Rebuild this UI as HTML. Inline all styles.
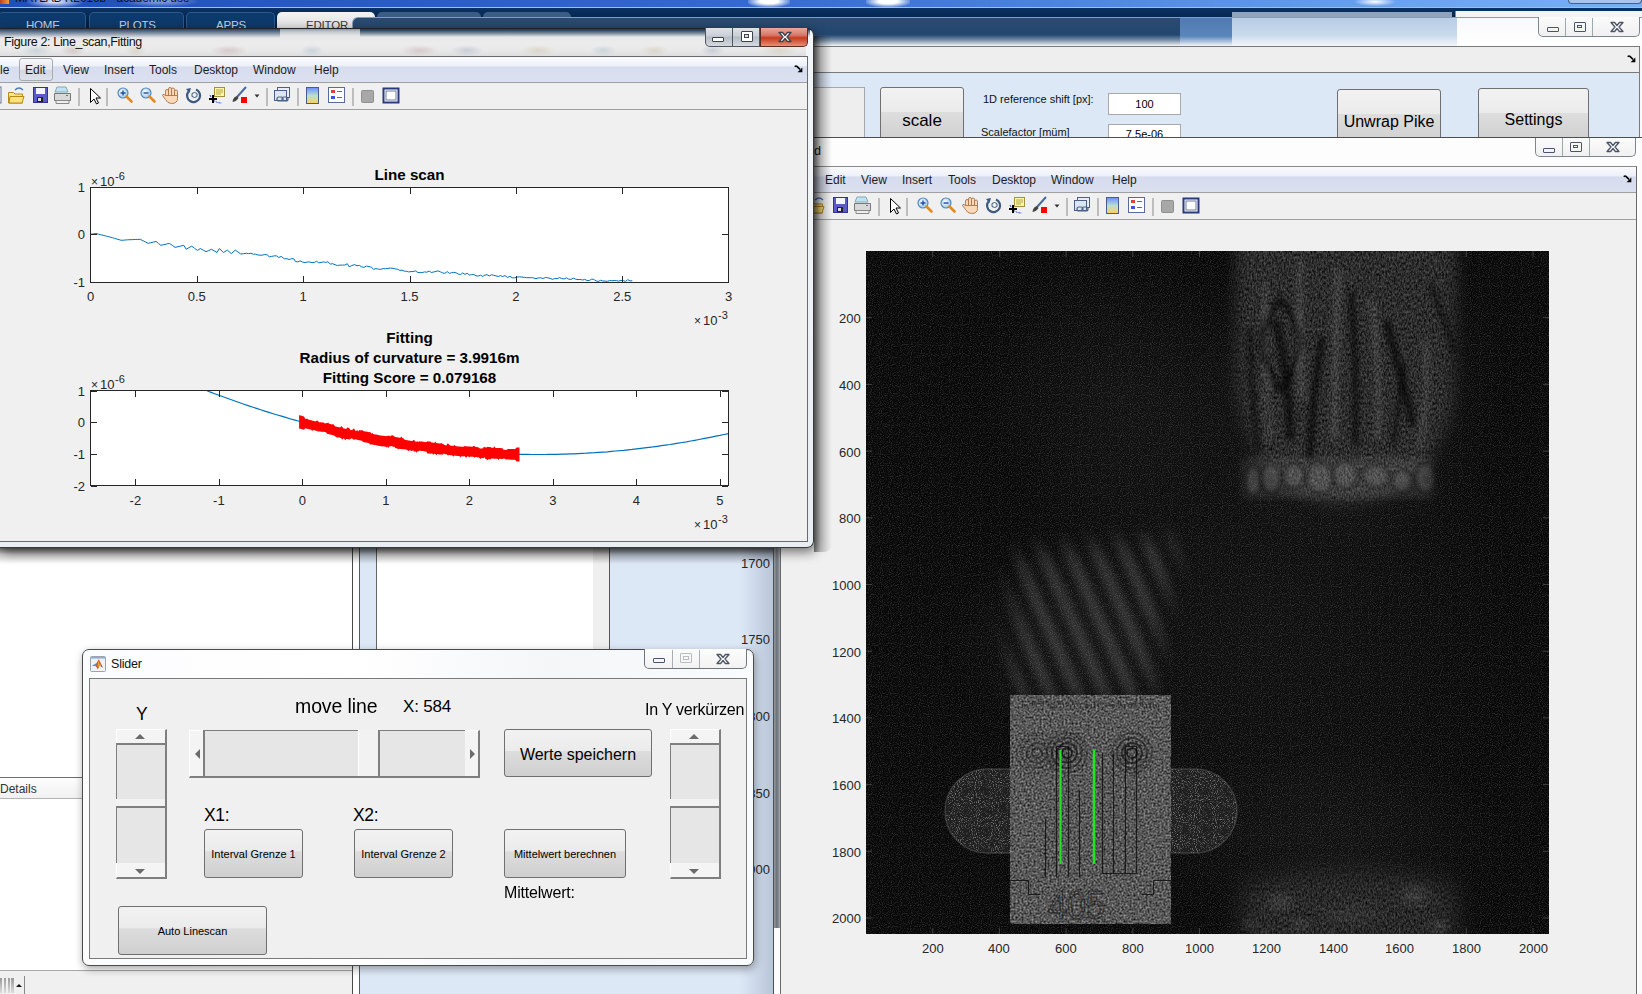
<!DOCTYPE html>
<html><head><meta charset="utf-8"><style>
*{margin:0;padding:0;box-sizing:border-box}
html,body{width:1642px;height:994px;overflow:hidden}
body{position:relative;background:#f0f0f0;font-family:"Liberation Sans",sans-serif;color:#000}
.a{position:absolute}
.t{position:absolute;white-space:nowrap;line-height:1}
.menu span{position:absolute;top:6px;font-size:12px;color:#1e1e1e}
.tick{position:absolute;font-size:13px;color:#262626;white-space:nowrap;line-height:1}
.btn{position:absolute;border:1px solid #707070;border-radius:3px;background:linear-gradient(#f2f2f2 0%,#ebebeb 45%,#dddddd 46%,#cfcfcf 100%);text-align:center;white-space:nowrap;color:#000}
.cap{position:absolute;border:1px solid #5f6b7a;border-top:none;border-radius:0 0 5px 5px;background:linear-gradient(#f4f6f9,#e6eaef 50%,#d6dce4 51%,#e8ecf1)}
</style></head><body>


<svg width="0" height="0" style="position:absolute"><defs>
<linearGradient id="gfold" x1="0" y1="0" x2="0" y2="1"><stop offset="0" stop-color="#fff2a8"/><stop offset="1" stop-color="#e8b830"/></linearGradient>
<linearGradient id="gcb" x1="0" y1="0" x2="0" y2="1"><stop offset="0" stop-color="#6a8cff"/><stop offset=".5" stop-color="#b8e0d0"/><stop offset="1" stop-color="#ffd060"/></linearGradient>
<radialGradient id="glens" cx=".4" cy=".4" r=".6"><stop offset="0" stop-color="#ffffff"/><stop offset="1" stop-color="#9cc8ee"/></radialGradient>
<symbol id="tb" overflow="visible">
 <rect x="-14" y="1" width="15" height="16" fill="#fff" stroke="#6a7090"/>
 <path d="M8.5 6.5h5l1.5 1.5h7.5v9h-14z" fill="url(#gfold)" stroke="#b58a18"/>
 <path d="M10 10.5h14l-2 6.5h-13z" fill="#ffe27a" stroke="#b58a18"/>
 <path d="M15 4 q4 -4 8 0" fill="none" stroke="#4a78b8" stroke-width="1.3"/>
 <rect x="33.5" y="1.5" width="14" height="15" fill="#5a5ac8" stroke="#33338a"/>
 <rect x="36" y="2" width="9" height="6" fill="#f4f4ff"/>
 <rect x="37" y="11" width="6" height="5" fill="#222"/><rect x="38" y="12" width="3" height="3" fill="#ddd"/>
 <path d="M57 1h9l2 5h-13z" fill="#bfe2f8" stroke="#8aa"/>
 <path d="M54.5 7.5h16v7h-16z" fill="#d8d8d8" stroke="#777"/>
 <path d="M56 14.5h13v3h-13z" fill="#eee" stroke="#888"/>
 <rect x="66" y="9" width="2" height="1" fill="#2a2"/>
 <rect x="78.5" y="2" width="1" height="18" fill="#8a8a8a"/>
 <path d="M90.5 2.5v14l3.5-3.5 2.5 5 2-1-2.5-5h4.5z" fill="#fff" stroke="#000" stroke-width="1"/>
 <rect x="106.5" y="2" width="1" height="18" fill="#8a8a8a"/>
 <circle cx="123" cy="7" r="5" fill="url(#glens)" stroke="#5a8ab8" stroke-width="1.2"/>
 <path d="M120.5 7h5M123 4.5v5" stroke="#1a50a0" stroke-width="1.4"/>
 <path d="M126.5 10.5l5 5" stroke="#e08a20" stroke-width="2.6" stroke-linecap="round"/>
 <circle cx="146" cy="7" r="5" fill="url(#glens)" stroke="#5a8ab8" stroke-width="1.2"/>
 <path d="M143.5 7h5" stroke="#1a50a0" stroke-width="1.4"/>
 <path d="M149.5 10.5l5 5" stroke="#e08a20" stroke-width="2.6" stroke-linecap="round"/>
 <g fill="#fbd9b8" stroke="#a8744a" stroke-width=".9"><rect x="165.5" y="3.5" width="3" height="9" rx="1.5"/><rect x="168.5" y="1.5" width="3" height="10" rx="1.5"/><rect x="171.5" y="2" width="3" height="10" rx="1.5"/><rect x="174.5" y="4" width="3" height="9" rx="1.5"/><path d="M165.5 9.5h12v3q0 5 -6 5q-4 0 -6 -4l-3 -4q0 -1.5 1.5 -1z"/></g>
 <path d="M196 3.5a6.5 6.5 0 1 1 -7.5 2" fill="none" stroke="#3a5a80" stroke-width="2.2"/>
 <path d="M186 3l3.5 4 1.5 -5z" fill="#3a5a80"/>
 <path d="M192 7.5l2.5 -1 2.5 1v3l-2.5 1 -2.5 -1z" fill="none" stroke="#3a5a80"/>
 <rect x="214.5" y="1.5" width="10" height="9" fill="#fff6a0" stroke="#a09040"/>
 <path d="M216 4h7M216 6h7M216 8h5" stroke="#a09040" stroke-width=".8"/>
 <path d="M210 9q3 8 12 8" fill="none" stroke="#2040c0" stroke-dasharray="2 1"/>
 <path d="M213 9v8M209 13h8" stroke="#000" stroke-width="2"/>
 <path d="M246 1l-9 10" stroke="#4a6aa0" stroke-width="2"/>
 <path d="M237 10q-4 1 -4.5 6 4 -0.5 6 -4z" fill="#444"/>
 <rect x="241" y="11" width="6" height="6" fill="#f00"/>
 <path d="M254.5 8.5h5l-2.5 3z" fill="#333"/>
 <rect x="266.5" y="2" width="1" height="18" fill="#8a8a8a"/>
 <rect x="277.5" y="1.5" width="12" height="10" fill="#e8eef8" stroke="#4a6088"/>
 <rect x="274.5" y="4.5" width="12" height="10" fill="#dbe6f4" stroke="#4a6088"/>
 <rect x="277" y="11" width="6" height="4" rx="2" fill="none" stroke="#4a6088" stroke-width="1.2"/><rect x="282" y="11" width="6" height="4" rx="2" fill="none" stroke="#4a6088" stroke-width="1.2"/>
 <rect x="297.5" y="2" width="1" height="18" fill="#8a8a8a"/>
 <rect x="306.5" y="1.5" width="12" height="16" fill="url(#gcb)" stroke="#4a5a8a"/>
 <rect x="328.5" y="1.5" width="16" height="15" fill="#fff" stroke="#5a6a9a"/>
 <rect x="331" y="4" width="4" height="3" fill="#e04040"/><rect x="331" y="10" width="4" height="3" fill="#4050e0"/>
 <path d="M337 5.5h5M337 11.5h5" stroke="#5a6a9a"/>
 <rect x="352.5" y="2" width="1" height="18" fill="#8a8a8a"/>
 <rect x="361.5" y="4.5" width="12" height="12" rx="1" fill="#a8a8a8" stroke="#909090"/>
 <rect x="383.5" y="2.5" width="15" height="14" fill="#fff" stroke="#2a3a7a" stroke-width="2"/>
 <rect x="386" y="5" width="10" height="9" fill="#fff" stroke="#6a7aa8"/>
</symbol></defs></svg>

<!-- ===== MATLAB main title (aero) ===== -->
<div class="a" style="left:0;top:0;width:1642px;height:8px;background:linear-gradient(90deg,#1f4fb8 0%,#2a5cc8 25%,#3468d2 45%,#4c85e0 65%,#69a2f0 85%,#78b0f6 100%)"></div>
<div class="a" style="left:25px;top:0;width:60px;height:8px;background:radial-gradient(ellipse at 50% 20%,rgba(255,255,255,.95),rgba(255,255,255,0) 70%)"></div>
<div class="a" style="left:120px;top:0;width:80px;height:7px;background:radial-gradient(ellipse at 50% 20%,rgba(255,255,255,.5),rgba(255,255,255,0) 70%)"></div>
<div class="t" style="left:15px;top:-8px;font-size:12px;color:#111;letter-spacing:-.1px">MATLAB R2016b - academic use</div>
<div class="a" style="left:0;top:0;width:9px;height:4px;background:linear-gradient(90deg,#c04020,#f0a040)"></div>
<div class="a" style="left:748px;top:0;width:42px;height:7px;background:radial-gradient(ellipse at 50% 20%,rgba(255,255,255,1) 30%,rgba(255,255,255,0) 80%)"></div>
<div class="a" style="left:866px;top:0;width:44px;height:7px;background:radial-gradient(ellipse at 50% 20%,rgba(255,255,255,1) 30%,rgba(255,255,255,0) 80%)"></div>
<div class="a" style="left:1355px;top:0;width:40px;height:6px;background:radial-gradient(ellipse at 50% 30%,rgba(255,255,255,1),rgba(255,255,255,0) 75%)"></div>
<div class="a" style="left:1568px;top:0;width:74px;height:4px;border:1px solid #4a5f80;border-top:none;border-radius:0 0 4px 4px;background:#a9c4ea"></div>
<div class="a" style="left:0;top:7px;width:1642px;height:1px;background:#9cc0f0"></div>
<div class="a" style="left:0;top:8px;width:1642px;height:21px;background:linear-gradient(#0a3263,#02234c 60%,#001a3d)"></div>
<!-- tabs -->
<div class="a" style="left:-2px;top:12px;width:88px;height:17px;border:1px solid #2d5a8a;border-bottom:none;border-radius:5px 5px 0 0;background:#0d3a6c"></div>
<div class="a" style="left:89px;top:12px;width:95px;height:17px;border:1px solid #2d5a8a;border-bottom:none;border-radius:5px 5px 0 0;background:#0d3a6c"></div>
<div class="a" style="left:186px;top:12px;width:89px;height:17px;border:1px solid #2d5a8a;border-bottom:none;border-radius:5px 5px 0 0;background:#0d3a6c"></div>
<div class="a" style="left:277px;top:12px;width:98px;height:17px;border-radius:5px 5px 0 0;background:linear-gradient(#f4f4f4,#dedede)"></div>
<div class="t" style="left:26px;top:20px;font-size:11.5px;color:#c5d3e4;letter-spacing:-.2px">HOME</div>
<div class="t" style="left:119px;top:20px;font-size:11.5px;color:#c5d3e4;letter-spacing:-.2px">PLOTS</div>
<div class="t" style="left:216px;top:20px;font-size:11.5px;color:#c5d3e4;letter-spacing:-.2px">APPS</div>
<div class="t" style="left:306px;top:20px;font-size:11.5px;color:#3a3a3a;letter-spacing:-.2px">EDITOR</div>
<div class="a" style="left:377px;top:12px;width:104px;height:6px;border-radius:5px 5px 0 0;background:#3c5d83"></div>
<div class="a" style="left:483px;top:12px;width:88px;height:6px;border-radius:5px 5px 0 0;background:#3c5d83"></div>
<!-- toolstrip blur band right -->
<div class="a" style="left:1232px;top:12px;width:220px;height:6px;background:#8fa4bc"></div>
<div class="a" style="left:1455px;top:11px;width:187px;height:7px;background:#f4f4f4;border-left:1px solid #888"></div>

<!-- ===== scale window (top right) ===== -->
<div class="a" style="left:352px;top:17px;width:1290px;height:29px;border-top:1px solid #8a9bb0;border-left:1px solid #8a9bb0;border-radius:6px 0 0 0;background:linear-gradient(#2a4a72 0%,#23476f 60%,#7e94ab 80%,#f4f6f8 100%)"></div>
<div class="a" style="left:1180px;top:18px;width:52px;height:28px;background:linear-gradient(#4f7ab0 0%,#5a86bb 65%,#f2f5f8 100%)"></div>
<div class="a" style="left:1232px;top:18px;width:225px;height:28px;background:linear-gradient(#b8cde6 0%,#c8d9ec 60%,#f4f7fa 100%)"></div>
<div class="a" style="left:1457px;top:18px;width:185px;height:28px;background:linear-gradient(#f8f9fb,#ffffff)"></div>
<div class="cap" style="left:1538px;top:17px;width:102px;height:20px;background:linear-gradient(#fbfbfb,#f0f0f0);border-color:#7d8590"></div>
<div class="a" style="left:1565px;top:18px;width:1px;height:18px;background:#9aa"></div>
<div class="a" style="left:1592px;top:18px;width:1px;height:18px;background:#9aa"></div>
<div class="a" style="left:1547px;top:27px;width:12px;height:5px;border:1.5px solid #4c5566;border-radius:1px"></div>
<div class="a" style="left:1574px;top:22px;width:12px;height:10px;border:1.5px solid #4c5566;border-radius:1px"><div class="a" style="left:2px;top:2px;width:5px;height:3px;border:1px solid #4c5566"></div></div>
<svg class="a" style="left:1610px;top:21px" width="14" height="12"><path d="M1 1.5h3.6l2.4 3 2.4-3h3.6l-4 4.5 4 4.5h-3.6l-2.4-3-2.4 3h-3.6l4-4.5z" fill="#fff" stroke="#4c5566" stroke-width="1.3" stroke-linejoin="round"/></svg>
<div class="a" style="left:814px;top:46px;width:828px;height:1px;background:#7a7a7a"></div>
<div class="a" style="left:814px;top:47px;width:826px;height:26px;background:#eeeeee"></div>
<svg class="a" style="left:1627px;top:55px" width="9" height="8"><path d="M0.8 1.8q1-1.3 2.2-.4L6 4.4" stroke="#000" stroke-width="1.5" fill="none"/><path d="M8.3 7.3V2.6L3.6 7.3z" fill="#000"/></svg>
<div class="a" style="left:814px;top:72px;width:828px;height:1px;background:#7a7a7a"></div>
<div class="a" style="left:814px;top:73px;width:826px;height:65px;background:#dde8f7"></div>
<div class="a" style="left:1639px;top:46px;width:1px;height:92px;background:#7a7a7a"></div>
<div class="a" style="left:1640px;top:46px;width:2px;height:92px;background:#fafafa"></div>
<div class="a" style="left:800px;top:87px;width:65px;height:51px;border:1px solid #a8a8a8;background:#eeeeee"></div>
<div class="btn" style="left:880px;top:87px;width:84px;height:55px;font-size:17px;line-height:66px">scale</div>
<div class="t" style="left:983px;top:94px;font-size:11px;color:#111">1D reference shift [px]:</div>
<div class="a" style="left:1108px;top:93px;width:73px;height:22px;background:#fff;border:1px solid #a9a9a9"></div>
<div class="t" style="left:1108px;top:99px;width:73px;text-align:center;font-size:11px">100</div>
<div class="t" style="left:981px;top:127px;font-size:11px;color:#111">Scalefactor [m&uuml;m]</div>
<div class="a" style="left:1108px;top:124px;width:73px;height:20px;background:#fff;border:1px solid #a9a9a9"></div>
<div class="t" style="left:1108px;top:129px;width:73px;text-align:center;font-size:11px">7.5e-06</div>
<div class="btn" style="left:1337px;top:89px;width:104px;height:55px;font-size:16px;line-height:64px">Unwrap Pike</div>
<div class="btn" style="left:1478px;top:88px;width:111px;height:55px;font-size:16px;line-height:62px">Settings</div>

<!-- ===== left main window panels (below fig 2) ===== -->
<div class="a" style="left:0;top:540px;width:352px;height:454px;background:#fff"></div>
<div class="a" style="left:0;top:777px;width:352px;height:1px;background:#6e6e6e"></div>
<div class="a" style="left:0;top:778px;width:352px;height:20px;background:linear-gradient(#fdfdfd,#f1f1f1)"></div>
<div class="t" style="left:0;top:783px;font-size:12px;color:#333">Details</div>
<div class="a" style="left:0;top:798px;width:352px;height:1px;background:#b4b4b4"></div>
<div class="a" style="left:0;top:970px;width:352px;height:1px;background:#a8a8a8"></div>
<div class="a" style="left:0;top:971px;width:352px;height:23px;background:#f0f0f0"></div>
<div class="a" style="left:0;top:978px;width:2px;height:15px;background:linear-gradient(#999,#ddd)"></div>
<div class="a" style="left:4px;top:978px;width:2px;height:15px;background:linear-gradient(#999,#ddd)"></div>
<div class="a" style="left:8px;top:978px;width:2px;height:15px;background:linear-gradient(#999,#ddd)"></div>
<div class="a" style="left:11px;top:978px;width:3px;height:15px;background:linear-gradient(#999,#ddd)"></div>
<div class="a" style="left:16px;top:984px;width:0;height:0;border-left:3px solid transparent;border-right:3px solid transparent;border-bottom:3px solid #111"></div>
<div class="a" style="left:24px;top:976px;width:1px;height:18px;background:#888"></div>
<div class="a" style="left:352px;top:540px;width:8px;height:454px;background:#fff;border-left:1px solid #4a4a4a;border-right:1px solid #5a5a5a"></div>
<div class="a" style="left:360px;top:540px;width:413px;height:454px;background:#dde8f7"></div>
<div class="a" style="left:360px;top:540px;width:17px;height:415px;background:#dde8f7;border-right:1px solid #666"></div>
<div class="a" style="left:377px;top:540px;width:216px;height:415px;background:#fff"></div>
<div class="a" style="left:593px;top:540px;width:16px;height:415px;background:#efefef"></div>
<div class="a" style="left:609px;top:540px;width:164px;height:415px;background:#dde8f7;border-left:1px solid #555"></div>
<div class="a" style="left:740px;top:540px;width:33px;height:454px;background:linear-gradient(90deg,rgba(221,232,247,0),rgba(160,175,195,.6))"></div>
<div class="tick" style="left:741px;top:557px">1700</div>
<div class="tick" style="left:741px;top:633px">1750</div>
<div class="tick" style="left:741px;top:710px">1800</div>
<div class="tick" style="left:741px;top:787px">1850</div>
<div class="tick" style="left:741px;top:863px">1900</div>
<!-- fig2 shadow on panels -->
<div class="a" style="left:0;top:548px;width:790px;height:16px;background:linear-gradient(rgba(0,0,0,.55),rgba(0,0,0,.2) 40%,rgba(0,0,0,0))"></div>

<!-- ===== right figure window ===== -->
<div class="a" style="left:773px;top:137px;width:869px;height:857px;background:#fdfdfd;border-left:1px solid #4e4e4e;border-top:1px solid #4e4e4e"></div>
<div class="a" style="left:774px;top:548px;width:6px;height:380px;background:linear-gradient(90deg,#8a8f96,#5a5f66 50%,#9aa0a8);opacity:.9"></div>
<div class="a" style="left:780px;top:166px;width:857px;height:828px;background:#f0f0f0;border-left:1px solid #6a6a6a;border-right:1px solid #6a6a6a;border-top:1px solid #8a8a8a"></div>
<div class="a" style="left:781px;top:167px;width:855px;height:25px;background:linear-gradient(#f9fafd 0%,#eef1f9 35%,#d6dcee 40%,#dbe0f0 100%)"></div>
<div class="a" style="left:781px;top:192px;width:855px;height:1px;background:#a0a0a0"></div>
<div class="a" style="left:781px;top:219px;width:855px;height:1px;background:#a0a0a0"></div>
<div class="menu a" style="left:781px;top:167px;width:855px;height:25px">
<span style="left:44px">Edit</span><span style="left:80px">View</span><span style="left:121px">Insert</span><span style="left:167px">Tools</span><span style="left:211px">Desktop</span><span style="left:270px">Window</span><span style="left:331px">Help</span>
</div>
<svg class="a" style="left:1623px;top:175px" width="9" height="8"><path d="M0.8 1.8q1-1.3 2.2-.4L6 4.4" stroke="#000" stroke-width="1.5" fill="none"/><path d="M8.3 7.3V2.6L3.6 7.3z" fill="#000"/></svg>
<div class="t" style="left:814px;top:145px;font-size:12.5px;color:#111">d</div>
<div class="cap" style="left:1535px;top:138px;width:101px;height:19px;background:linear-gradient(#fbfbfb,#f1f1f1);border-color:#7d8590"></div>
<div class="a" style="left:1562px;top:138px;width:1px;height:18px;background:#9aa"></div>
<div class="a" style="left:1589px;top:138px;width:1px;height:18px;background:#9aa"></div>
<div class="a" style="left:1543px;top:148px;width:12px;height:5px;border:1.5px solid #4c5566;border-radius:1px"></div>
<div class="a" style="left:1570px;top:142px;width:12px;height:10px;border:1.5px solid #4c5566;border-radius:1px"><div class="a" style="left:2px;top:2px;width:5px;height:3px;border:1px solid #4c5566"></div></div>
<svg class="a" style="left:1606px;top:141px" width="14" height="12"><path d="M1 1.5h3.6l2.4 3 2.4-3h3.6l-4 4.5 4 4.5h-3.6l-2.4-3-2.4 3h-3.6l4-4.5z" fill="#fff" stroke="#4c5566" stroke-width="1.3" stroke-linejoin="round"/></svg>
<svg class="a" style="left:781px;top:193px" width="855" height="26"><use href="#tb" x="19" y="3"/></svg>
<!-- image axes -->
<div class="a" id="img" style="left:866px;top:251px;width:683px;height:683px;background:#070707;overflow:hidden"><svg width="683" height="683" style="position:absolute;left:0;top:0"><defs>
<filter id="tex" x="0" y="0" width="100%" height="100%" color-interpolation-filters="sRGB">
 <feTurbulence type="fractalNoise" baseFrequency="0.6 0.35" numOctaves="2" seed="5" result="n"/>
 <feColorMatrix in="n" type="matrix" values="0.45 0 0 0 -0.05  0.45 0 0 0 -0.05  0.45 0 0 0 -0.05  0 0 0 0 1"/>
</filter>
<filter id="tex2" x="0" y="0" width="100%" height="100%" color-interpolation-filters="sRGB">
 <feTurbulence type="fractalNoise" baseFrequency="0.5" numOctaves="2" seed="8" result="n"/>
 <feColorMatrix in="n" type="matrix" values="0.75 0 0 0 -0.03  0.75 0 0 0 -0.03  0.75 0 0 0 -0.03  0 0 0 0 1"/>
</filter>
<filter id="tex3" x="0" y="0" width="100%" height="100%" color-interpolation-filters="sRGB">
 <feTurbulence type="fractalNoise" baseFrequency="0.95" numOctaves="2" seed="13" result="n"/>
 <feColorMatrix in="n" type="matrix" values="0 0 0 0 0.7  0 0 0 0 0.7  0 0 0 0 0.7  2.8 0 0 0 -1.4"/>
</filter>
<filter id="bgn" x="0" y="0" width="100%" height="100%" color-interpolation-filters="sRGB">
 <feTurbulence type="fractalNoise" baseFrequency="0.9" numOctaves="1" seed="2" result="n"/>
 <feColorMatrix in="n" type="matrix" values="0 0 0 0 0.4  0 0 0 0 0.4  0 0 0 0 0.4  1.3 0 0 0 -0.6"/>
</filter>
<filter id="bm10" x="-50%" y="-50%" width="200%" height="200%"><feGaussianBlur stdDeviation="12"/></filter>
<filter id="bm7" x="-50%" y="-50%" width="200%" height="200%"><feGaussianBlur stdDeviation="7"/></filter>
<filter id="bm4" x="-50%" y="-50%" width="200%" height="200%"><feGaussianBlur stdDeviation="4"/></filter>
<filter id="bl3" x="-50%" y="-50%" width="200%" height="200%"><feGaussianBlur stdDeviation="2.5"/></filter>
<radialGradient id="hz"><stop offset="0" stop-color="#fff" stop-opacity=".03"/><stop offset=".6" stop-color="#fff" stop-opacity=".015"/><stop offset="1" stop-color="#fff" stop-opacity="0"/></radialGradient>
<radialGradient id="hzb"><stop offset="0" stop-color="#fff" stop-opacity=".12"/><stop offset="1" stop-color="#fff" stop-opacity="0"/></radialGradient>
<radialGradient id="hz2"><stop offset="0" stop-color="#fff" stop-opacity=".05"/><stop offset="1" stop-color="#fff" stop-opacity="0"/></radialGradient>
<pattern id="diag" width="25" height="25" patternUnits="userSpaceOnUse" patternTransform="translate(8 0) rotate(-24)">
 <rect x="0" width="12" height="25" fill="#fff" fill-opacity=".15"/>
</pattern>

<mask id="mrow" maskUnits="userSpaceOnUse" x="0" y="0" width="683" height="683"><path d="M377 207 h190 v40 h-190z" fill="#fff" filter="url(#bm4)"/></mask>
<mask id="mtop" maskUnits="userSpaceOnUse" x="0" y="0" width="683" height="683"><path d="M370 -16 h222 l-4 170 q-25 92 -107 100 q-90 0 -111 -115 z" fill="#fff" filter="url(#bm7)"/></mask>
<mask id="mdiag" maskUnits="userSpaceOnUse" x="0" y="0" width="683" height="683"><path d="M149 301 L314 284 L284 449 L142 449 Z" fill="#fff" filter="url(#bm10)"/></mask>
<mask id="mbot" maskUnits="userSpaceOnUse" x="0" y="0" width="683" height="683"><path d="M376 634 q110 -30 215 0 v70 h-215z" fill="#fff" filter="url(#bm10)"/></mask>
<clipPath id="ccap"><path d="M146 518 h-25 a42 42 0 0 0 0 84 h25 z M304 518 h25 a42 42 0 0 1 0 84 h-25 z"/></clipPath>
<clipPath id="crect"><rect x="144" y="444" width="161" height="229"/></clipPath></defs>
<rect width="683" height="683" fill="#080808"/>
<rect width="683" height="683" filter="url(#bgn)"/>
<ellipse cx="394" cy="349" rx="260" ry="340" fill="url(#hz)"/>
<ellipse cx="244" cy="139" rx="130" ry="150" fill="url(#hz)"/>
<ellipse cx="484" cy="129" rx="160" ry="180" fill="url(#hz2)"/>
<ellipse cx="474" cy="589" rx="170" ry="90" fill="url(#hz)"/>
<ellipse cx="194" cy="389" rx="120" ry="90" fill="url(#hz)"/>
<g mask="url(#mtop)">
<rect x="344" y="0" width="280" height="300" filter="url(#tex)"/>
<g filter="url(#bl3)">
<path d="M414 49 q-35 40 0 90 q40 -50 0 -90z" stroke="#000" stroke-opacity="0.55" stroke-width="7" fill="none"/>
<path d="M410 69 Q424 129 424 189" stroke="#000" stroke-opacity="0.60" stroke-width="8" fill="none"/>
<path d="M456 86 Q446 149 444 209" stroke="#000" stroke-opacity="0.60" stroke-width="7" fill="none"/>
<path d="M485 41 Q492 119 489 195" stroke="#000" stroke-opacity="0.60" stroke-width="6" fill="none"/>
<path d="M520 69 Q534 119 547 174" stroke="#000" stroke-opacity="0.60" stroke-width="8" fill="none"/>
<path d="M538 114 Q532 159 527 195" stroke="#000" stroke-opacity="0.50" stroke-width="5" fill="none"/>
<path d="M565 34 Q579 69 589 103" stroke="#000" stroke-opacity="0.50" stroke-width="6" fill="none"/>
<path d="M384 79 Q386 149 392 199" stroke="#000" stroke-opacity="0.50" stroke-width="6" fill="none"/>
<path d="M434 9 Q434 69 436 149" stroke="#fff" stroke-opacity="0.10" stroke-width="6" fill="none"/>
<path d="M472 19 Q470 99 468 189" stroke="#fff" stroke-opacity="0.10" stroke-width="7" fill="none"/>
<path d="M506 49 Q514 119 512 189" stroke="#fff" stroke-opacity="0.10" stroke-width="6" fill="none"/>
<path d="M559 89 Q564 139 554 199" stroke="#fff" stroke-opacity="0.09" stroke-width="6" fill="none"/>
<path d="M399 29 Q396 99 404 189" stroke="#fff" stroke-opacity="0.08" stroke-width="6" fill="none"/>
</g></g>
<g mask="url(#mrow)"><rect x="372" y="204" width="200" height="46" fill="#fff" fill-opacity=".10"/>
<ellipse cx="387" cy="230" rx="6" ry="14" fill="#fff" fill-opacity=".08" stroke="#000" stroke-opacity=".6" stroke-width="3.5" filter="url(#bl3)"/>
<ellipse cx="405" cy="227" rx="8" ry="14" fill="#fff" fill-opacity=".08" stroke="#000" stroke-opacity=".6" stroke-width="3.5" filter="url(#bl3)"/>
<ellipse cx="428" cy="225" rx="9" ry="11" fill="#fff" fill-opacity=".08" stroke="#000" stroke-opacity=".6" stroke-width="3.5" filter="url(#bl3)"/>
<ellipse cx="454" cy="227" rx="12" ry="14" fill="#fff" fill-opacity=".08" stroke="#000" stroke-opacity=".6" stroke-width="3.5" filter="url(#bl3)"/>
<ellipse cx="479" cy="224" rx="11" ry="13" fill="#fff" fill-opacity=".08" stroke="#000" stroke-opacity=".6" stroke-width="3.5" filter="url(#bl3)"/>
<ellipse cx="510" cy="225" rx="12" ry="10" fill="#fff" fill-opacity=".08" stroke="#000" stroke-opacity=".6" stroke-width="3.5" filter="url(#bl3)"/>
<ellipse cx="536" cy="230" rx="8" ry="10" fill="#fff" fill-opacity=".08" stroke="#000" stroke-opacity=".6" stroke-width="3.5" filter="url(#bl3)"/>
<ellipse cx="560" cy="227" rx="9" ry="13" fill="#fff" fill-opacity=".08" stroke="#000" stroke-opacity=".6" stroke-width="3.5" filter="url(#bl3)"/>
</g>
<g mask="url(#mdiag)"><rect width="683" height="683" fill="url(#diag)" filter="url(#bm4)"/></g>
<g mask="url(#mbot)">
<rect x="354" y="599" width="260" height="90" filter="url(#tex)" opacity=".9"/>
</g>
<ellipse cx="414" cy="651" rx="18" ry="14" fill="url(#hzb)" opacity="0.80"/>
<ellipse cx="434" cy="674" rx="14" ry="10" fill="url(#hzb)" opacity="0.64"/>
<ellipse cx="549" cy="644" rx="20" ry="16" fill="url(#hzb)" opacity="0.80"/>
<ellipse cx="574" cy="675" rx="14" ry="10" fill="url(#hzb)" opacity="0.72"/>
<ellipse cx="384" cy="673" rx="12" ry="9" fill="url(#hzb)" opacity="0.56"/>
<ellipse cx="484" cy="664" rx="40" ry="14" fill="url(#hzb)" opacity="0.48"/>
<g clip-path="url(#ccap)"><rect x="74" y="516" width="300" height="90" fill="#1e1e1e"/><rect x="74" y="516" width="300" height="90" filter="url(#tex3)" opacity=".75"/></g>
<path d="M146 518 h-25 a42 42 0 0 0 0 84 h25 z M304 518 h25 a42 42 0 0 1 0 84 h-25 z" fill="none" stroke="#8a8a8a" stroke-opacity=".3" stroke-width="1.5"/>
<g clip-path="url(#crect)"><rect x="144" y="444" width="161" height="229" filter="url(#tex2)"/></g>
<path d="M179.5 567.5L179.5 626.5M190.5 495.5L190.5 626.5M202.5 495.5L202.5 626.5M213.5 539.5L213.5 626.5M236.5 501.5L236.5 622.5M247.5 501.5L247.5 622.5M259.5 495.5L259.5 622.5M270.5 495.5L270.5 622.5M236.5 622.5L270.5 622.5M190.5 495.5L202.5 495.5M259.5 495.5L270.5 495.5" stroke="#111" stroke-width="1.2" fill="none" opacity=".85"/>
<circle cx="201" cy="502" r="5" stroke="#000" stroke-width="2" fill="none" opacity="0.67"/>
<circle cx="201" cy="502" r="10" stroke="#000" stroke-width="2" fill="none" opacity="0.53"/>
<circle cx="201" cy="502" r="15" stroke="#000" stroke-width="2" fill="none" opacity="0.40"/>
<circle cx="201" cy="502" r="20" stroke="#000" stroke-width="2" fill="none" opacity="0.27"/>
<circle cx="266" cy="502" r="5" stroke="#000" stroke-width="2" fill="none" opacity="0.67"/>
<circle cx="266" cy="502" r="10" stroke="#000" stroke-width="2" fill="none" opacity="0.53"/>
<circle cx="266" cy="502" r="15" stroke="#000" stroke-width="2" fill="none" opacity="0.40"/>
<circle cx="266" cy="502" r="20" stroke="#000" stroke-width="2" fill="none" opacity="0.27"/>
<circle cx="171" cy="502" r="5" stroke="#000" stroke-width="2" fill="none" opacity="0.40"/>
<circle cx="171" cy="502" r="10" stroke="#000" stroke-width="2" fill="none" opacity="0.32"/>
<circle cx="171" cy="502" r="15" stroke="#000" stroke-width="2" fill="none" opacity="0.24"/>
<circle cx="171" cy="502" r="20" stroke="#000" stroke-width="2" fill="none" opacity="0.16"/>
<text x="0" y="0" font-family="Liberation Sans, sans-serif" font-size="40" fill="none" stroke="#1a1a1a" stroke-opacity=".75" stroke-width="1.1" transform="translate(182 668) scale(.85 1)">405</text>
<path d="M144.5 629.5h18v14h12M305.5 629.5h-18v14h-12" stroke="#1a1a1a" fill="none"/>
<path d="M156.2 453.0h2.6v4.8M159.9 453.7h1.1v3.4M163.7 452.6h2.8v2.3M166.1 451.0h2.1v3.7M168.6 450.9h1.6v4.7M173.5 450.6h2.6v2.4M176.6 450.5h1.0v4.6M179.2 450.9h3.0v4.6M182.8 453.8h2.1v4.0M186.0 453.8h2.4v4.9M190.8 451.2h1.7v2.5M192.7 450.3h1.6v3.8M195.8 452.7h1.7v2.9M200.8 451.9h1.6v3.4M204.0 450.2h3.0v2.1M207.5 453.4h1.0v4.4M210.1 452.3h1.0v2.1M213.2 453.8h1.4v4.3M218.1 453.8h1.7v3.1M220.6 453.1h1.2v4.2M224.6 453.4h1.1v4.8M226.6 451.4h2.2v4.8M230.5 453.7h2.1v2.9M233.8 450.7h1.2v2.4M238.0 454.0h1.3v2.1M242.0 452.1h1.8v2.7M244.6 453.3h1.9v3.3M246.9 453.7h1.1v3.5M251.9 450.5h2.5v4.8M254.9 453.2h1.2v3.3M257.3 453.4h1.6v3.4M262.4 453.4h3.0v3.4M264.8 452.9h2.0v2.9M268.0 450.6h1.8v5.0M272.5 452.5h2.0v3.0M274.2 451.1h2.6v4.6M278.1 453.1h2.5v4.1M282.1 453.0h1.7v4.1M284.8 451.9h2.5v4.1M288.2 453.8h2.3v3.7" stroke="#222" stroke-width="1" fill="none" opacity=".7"/>
<path d="M194.5 499 V613" stroke="#22e522" stroke-width="2"/>
<path d="M228.0 499 V613" stroke="#22e522" stroke-width="2.6"/>
<path d="M0 66.7h6M683 66.7h-6M66.7 683v-6M66.7 0v6M0 133.4h6M683 133.4h-6M133.4 683v-6M133.4 0v6M0 200.1h6M683 200.1h-6M200.1 683v-6M200.1 0v6M0 266.8h6M683 266.8h-6M266.8 683v-6M266.8 0v6M0 333.5h6M683 333.5h-6M333.5 683v-6M333.5 0v6M0 400.2h6M683 400.2h-6M400.2 683v-6M400.2 0v6M0 466.9h6M683 466.9h-6M466.9 683v-6M466.9 0v6M0 533.6h6M683 533.6h-6M533.6 683v-6M533.6 0v6M0 600.3h6M683 600.3h-6M600.3 683v-6M600.3 0v6M0 667.0h6M683 667.0h-6M667.0 683v-6M667.0 0v6" stroke="#555" stroke-width="1" fill="none" opacity=".7"/>
</svg></div>
<div class="tick" style="left:839px;top:312px">200</div>
<div class="tick" style="left:839px;top:379px">400</div>
<div class="tick" style="left:839px;top:446px">600</div>
<div class="tick" style="left:839px;top:512px">800</div>
<div class="tick" style="left:832px;top:579px">1000</div>
<div class="tick" style="left:832px;top:646px">1200</div>
<div class="tick" style="left:832px;top:712px">1400</div>
<div class="tick" style="left:832px;top:779px">1600</div>
<div class="tick" style="left:832px;top:846px">1800</div>
<div class="tick" style="left:832px;top:912px">2000</div>
<div class="tick" style="left:922px;top:942px">200</div>
<div class="tick" style="left:988px;top:942px">400</div>
<div class="tick" style="left:1055px;top:942px">600</div>
<div class="tick" style="left:1122px;top:942px">800</div>
<div class="tick" style="left:1185px;top:942px">1000</div>
<div class="tick" style="left:1252px;top:942px">1200</div>
<div class="tick" style="left:1319px;top:942px">1400</div>
<div class="tick" style="left:1385px;top:942px">1600</div>
<div class="tick" style="left:1452px;top:942px">1800</div>
<div class="tick" style="left:1519px;top:942px">2000</div>

<!-- ===== Figure 2 window ===== -->
<div class="a" style="left:814px;top:36px;width:18px;height:516px;background:linear-gradient(90deg,rgba(0,0,0,.5),rgba(0,0,0,.22) 35%,rgba(0,0,0,0));border-radius:0 0 8px 0"></div>
<div class="a" style="left:0;top:28px;width:814px;height:520px;box-shadow:2px 4px 12px rgba(0,0,0,.55);border-top:1px solid #222;border-right:1px solid #3a3a3a;border-bottom:1px solid #3a3a3a;border-radius:0 7px 7px 0;background:linear-gradient(#f3f6f9,#e9eef3)"></div>
<div class="a" style="left:0;top:29px;width:806px;height:27px;background:linear-gradient(#8d99a6 0px,#c8ccd0 3px,#e6e7e8 7px,#ececec 14px,#e8e8e8 22px,#dcdddf 27px)"></div>
<div class="a" style="left:0;top:29px;width:280px;height:9px;background:linear-gradient(rgba(10,40,80,.75),rgba(230,232,234,0))"></div>
<div class="a" style="left:20px;top:45px;width:33px;height:11px;background:radial-gradient(ellipse,rgba(100,140,170,.22),rgba(100,140,170,0) 70%)"></div>
<div class="a" style="left:60px;top:45px;width:26px;height:11px;background:radial-gradient(ellipse,rgba(150,90,90,.22),rgba(150,90,90,0) 70%)"></div>
<div class="a" style="left:125px;top:45px;width:22px;height:11px;background:radial-gradient(ellipse,rgba(170,150,90,.22),rgba(170,150,90,0) 70%)"></div>
<div class="a" style="left:210px;top:45px;width:38px;height:11px;background:radial-gradient(ellipse,rgba(150,90,90,.22),rgba(150,90,90,0) 70%)"></div>
<div class="a" style="left:300px;top:45px;width:24px;height:11px;background:radial-gradient(ellipse,rgba(100,140,170,.22),rgba(100,140,170,0) 70%)"></div>
<div class="a" style="left:400px;top:45px;width:39px;height:11px;background:radial-gradient(ellipse,rgba(150,90,90,.22),rgba(150,90,90,0) 70%)"></div>
<div class="a" style="left:450px;top:45px;width:34px;height:11px;background:radial-gradient(ellipse,rgba(90,110,150,.22),rgba(90,110,150,0) 70%)"></div>
<div class="a" style="left:520px;top:45px;width:36px;height:11px;background:radial-gradient(ellipse,rgba(170,150,90,.22),rgba(170,150,90,0) 70%)"></div>
<div class="a" style="left:590px;top:45px;width:27px;height:11px;background:radial-gradient(ellipse,rgba(100,140,170,.22),rgba(100,140,170,0) 70%)"></div>
<div class="a" style="left:640px;top:45px;width:29px;height:11px;background:radial-gradient(ellipse,rgba(170,150,90,.22),rgba(170,150,90,0) 70%)"></div>
<div class="a" style="left:700px;top:45px;width:25px;height:11px;background:radial-gradient(ellipse,rgba(90,110,150,.22),rgba(90,110,150,0) 70%)"></div>
<div class="a" style="left:760px;top:45px;width:38px;height:11px;background:radial-gradient(ellipse,rgba(170,150,90,.22),rgba(170,150,90,0) 70%)"></div>
<div class="a" style="left:360px;top:29px;width:450px;height:8px;background:linear-gradient(#1c3654,rgba(230,232,234,0))"></div>
<div class="t" style="left:4px;top:36px;font-size:12.5px;letter-spacing:-0.35px;color:#111">Figure 2: Line_scan,Fitting</div>
<div class="cap" style="left:705px;top:28px;width:28px;height:19px;border-radius:0 0 0 5px;border-color:#4e5560;background:linear-gradient(#dfe3e8,#c9ced5 45%,#b5bcc5 50%,#d5dade)"></div>
<div class="cap" style="left:733px;top:28px;width:27px;height:19px;border-radius:0;border-left:none;border-color:#4e5560;background:linear-gradient(#dfe3e8,#c9ced5 45%,#b5bcc5 50%,#d5dade)"></div>
<div class="cap" style="left:760px;top:28px;width:48px;height:19px;border-radius:0 0 5px 0;border-color:#5a2b20;background:linear-gradient(#e8a89a,#d8786a 40%,#c63a20 55%,#d86a50 80%,#e8907a)"></div>
<div class="a" style="left:712px;top:37px;width:12px;height:5px;border:1.5px solid #3c4350;background:#fff;border-radius:1px"></div>
<div class="a" style="left:741px;top:31px;width:12px;height:11px;border:1.5px solid #3c4350;background:#fff;border-radius:1px"><div class="a" style="left:2px;top:2px;width:5px;height:4px;border:1px solid #3c4350;background:#e0e0e0"></div></div>
<svg class="a" style="left:778px;top:31px" width="14" height="12"><path d="M1 1.5h3.6l2.4 3 2.4-3h3.6l-4 4.5 4 4.5h-3.6l-2.4-3-2.4 3h-3.6l4-4.5z" fill="#fff" stroke="#3c4350" stroke-width="1.3" stroke-linejoin="round"/></svg>
<div class="a" style="left:0;top:56px;width:808px;height:486px;background:#f0f0f0;border-top:1px solid #6a6a6a;border-right:1px solid #6a6a6a;border-bottom:1px solid #6a6a6a"></div>
<div class="a" style="left:0;top:57px;width:807px;height:25px;background:linear-gradient(#fafbfd 0%,#eef1f9 35%,#d7ddee 40%,#dce1f1 100%)"></div>
<div class="a" style="left:0;top:82px;width:807px;height:1px;background:#a0a0a0"></div>
<div class="a" style="left:0;top:109px;width:807px;height:1px;background:#a0a0a0"></div>
<div class="a" style="left:19px;top:58px;width:34px;height:23px;border:1px solid #a7abb3;border-radius:3px;background:linear-gradient(#f6f7f9,#e3e6ec 50%,#d2d7e2 51%,#dde1ea)"></div>
<div class="menu a" style="left:0;top:57px;width:807px;height:25px">
<span style="left:-10px">File</span><span style="left:25px">Edit</span><span style="left:63px">View</span><span style="left:104px">Insert</span><span style="left:149px">Tools</span><span style="left:194px">Desktop</span><span style="left:253px">Window</span><span style="left:314px">Help</span>
</div>
<svg class="a" style="left:794px;top:65px" width="9" height="8"><path d="M0.8 1.8q1-1.3 2.2-.4L6 4.4" stroke="#000" stroke-width="1.5" fill="none"/><path d="M8.3 7.3V2.6L3.6 7.3z" fill="#000"/></svg>
<svg class="a" style="left:0;top:83px" width="807" height="26"><use href="#tb" x="0" y="3"/></svg>
<svg class="a" style="left:0;top:0" width="814" height="548" font-family="Liberation Sans, sans-serif" font-size="13" fill="#262626">
<rect x="90.5" y="187.5" width="638" height="95" fill="#fff"/>
<polyline points="90.4,234.3 93.2,233.9 95.9,233.5 98.3,234.1 100.7,234.7 103.1,235.3 105.4,235.9 107.8,236.5 110.2,237.1 112.4,237.7 114.6,238.4 116.9,239.0 119.1,239.7 121.3,240.3 124.4,240.1 127.6,239.8 130.1,239.7 132.7,239.6 135.2,239.5 137.8,239.4 140.3,239.3 142.9,240.7 145.6,242.0 148.2,243.4 150.8,242.7 153.5,242.1 156.1,241.4 158.4,243.4 160.8,245.3 163.7,244.7 166.6,244.0 169.5,243.4 172.3,245.4 175.1,247.4 178.0,246.7 180.9,246.0 183.8,245.3 186.2,249.3 188.9,247.7 191.7,246.1 194.5,248.2 197.3,250.4 200.4,248.5 203.2,250.1 206.0,251.7 208.8,250.5 211.5,249.3 214.2,250.9 217.0,252.5 219.4,248.5 223.4,252.5 227.4,250.1 231.3,253.6 235.3,250.1 238.1,252.1 240.8,254.0 243.6,253.7 246.4,253.3 248.7,253.6 250.9,253.3 253.2,254.2 255.4,254.1 257.7,254.9 259.9,255.2 262.2,255.2 264.6,254.5 266.9,254.7 269.3,256.8 271.7,256.4 274.1,255.9 276.4,255.8 278.8,257.5 281.2,256.4 284.4,258.8 286.8,258.7 289.1,259.5 291.5,258.7 293.9,258.8 295.4,261.5 297.8,261.9 300.2,260.9 302.5,262.0 304.9,262.6 307.3,262.0 309.7,262.0 312.0,262.6 314.2,262.5 316.5,261.2 318.7,262.8 321.0,262.5 323.2,261.9 325.5,262.4 327.9,261.8 330.3,264.1 332.6,263.7 335.0,264.7 337.4,265.5 339.8,265.1 342.3,265.1 344.8,265.1 347.3,263.7 349.1,266.8 351.9,265.5 354.6,264.6 357.0,265.7 359.4,265.4 361.7,266.9 364.1,267.3 366.5,266.0 368.9,266.6 371.3,267.2 373.6,269.3 376.0,268.6 378.4,269.2 380.8,269.3 383.3,268.5 385.7,268.8 388.1,268.3 390.6,268.1 393.0,268.3 395.2,268.9 397.5,269.2 399.7,270.3 401.9,270.2 404.2,271.1 406.4,271.3 408.6,271.9 410.9,271.6 413.1,271.6 415.4,270.9 417.7,272.4 420.0,272.7 422.2,272.6 424.5,271.9 426.8,272.2 429.1,271.1 431.4,272.5 433.6,272.0 435.9,271.4 438.2,270.9 440.5,271.9 442.7,272.9 444.9,273.4 447.2,271.6 449.4,273.4 451.6,272.7 453.8,272.3 456.1,272.8 458.3,274.1 460.5,274.5 462.7,272.9 464.9,274.4 467.2,273.3 469.4,275.0 471.6,274.7 473.8,274.5 476.0,275.8 478.2,276.1 480.5,275.2 482.7,276.4 484.9,275.1 487.1,274.7 489.3,275.9 491.5,274.8 493.7,275.3 496.0,275.9 498.2,276.5 500.4,275.6 502.6,276.5 505.0,275.6 507.5,277.5 509.9,276.3 512.3,277.8 514.8,277.8 517.2,277.0 519.6,276.8 521.9,277.1 524.2,277.3 526.6,277.7 529.0,277.7 531.3,277.7 533.7,277.9 536.0,278.7 538.4,277.9 540.7,277.8 543.1,278.5 545.4,277.5 547.8,277.8 550.1,278.3 552.4,279.4 554.8,278.5 557.1,278.7 559.4,277.6 561.7,278.5 564.1,279.0 566.4,277.8 568.7,279.2 571.0,279.3 573.4,278.2 575.7,279.2 578.0,279.6 580.2,279.4 582.5,280.0 584.7,279.5 587.0,280.4 589.2,280.6 591.5,279.2 593.7,279.4 596.0,280.9 598.2,281.5 600.5,280.3 602.7,280.9 605.0,281.1 607.3,281.3 609.5,280.6 611.8,280.7 614.1,280.6 616.4,280.6 618.6,281.1 620.9,280.4 623.2,280.6 625.5,281.4 627.8,279.7 630.0,280.9 632.3,280.7" fill="none" stroke="#0072bd" stroke-width="1"/>
<rect x="90.5" y="187.5" width="638" height="95" fill="none" stroke="#262626" stroke-width="1"/>
<path d="M90.5 188v6M90.5 282v-6M197.5 188v6M197.5 282v-6M303.5 188v6M303.5 282v-6M410.5 188v6M410.5 282v-6M516.5 188v6M516.5 282v-6M622.5 188v6M622.5 282v-6M728.5 188v6M728.5 282v-6M91 187.5h6M728 187.5h-6M91 234.5h6M728 234.5h-6M91 282.5h6M728 282.5h-6" stroke="#262626" stroke-width="1"/>
<text x="90.5" y="301.0" text-anchor="middle">0</text>
<text x="196.8" y="301.0" text-anchor="middle">0.5</text>
<text x="303.2" y="301.0" text-anchor="middle">1</text>
<text x="409.5" y="301.0" text-anchor="middle">1.5</text>
<text x="515.8" y="301.0" text-anchor="middle">2</text>
<text x="622.2" y="301.0" text-anchor="middle">2.5</text>
<text x="728.5" y="301.0" text-anchor="middle">3</text>
<text x="85.0" y="192.0" text-anchor="end">1</text>
<text x="85.0" y="239.0" text-anchor="end">0</text>
<text x="85.0" y="287.0" text-anchor="end">-1</text>
<text x="91" y="186" font-size="12">&#215;</text><text x="100" y="186">10</text><text x="115" y="180" font-size="11">-6</text>
<text x="694" y="325" font-size="12">&#215;</text><text x="703" y="325">10</text><text x="718" y="319" font-size="11">-3</text>
<text x="409.5" y="180" text-anchor="middle" font-weight="bold" font-size="15.2" fill="#000">Line scan</text>
<text x="409.5" y="343" text-anchor="middle" font-weight="bold" font-size="15.2" fill="#000">Fitting</text>
<text x="409.5" y="363" text-anchor="middle" font-weight="bold" font-size="15.2" fill="#000">Radius of curvature = 3.9916m</text>
<text x="409.5" y="383" text-anchor="middle" font-weight="bold" font-size="15.2" fill="#000">Fitting Score = 0.079168</text>
<rect x="90.5" y="390.5" width="638" height="95" fill="#fff"/>
<polyline points="206.4,390.5 210.5,392.1 214.7,393.7 218.9,395.3 223.1,396.8 227.2,398.3 231.4,399.8 235.6,401.3 239.8,402.7 244.0,404.2 248.1,405.6 252.3,407.0 256.5,408.4 260.7,409.7 264.8,411.1 269.0,412.4 273.2,413.7 277.4,415.0 281.5,416.2 285.7,417.4 289.9,418.7 294.1,419.9 298.2,421.0 302.4,422.2 306.6,423.3 310.8,424.4 314.9,425.5 319.1,426.6 323.3,427.6 327.5,428.7 331.6,429.7 335.8,430.7 340.0,431.7 344.2,432.6 348.3,433.5 352.5,434.4 356.7,435.3 360.9,436.2 365.0,437.1 369.2,437.9 373.4,438.7 377.6,439.5 381.7,440.3 385.9,441.0 390.1,441.7 394.3,442.4 398.4,443.1 402.6,443.8 406.8,444.5 411.0,445.1 415.1,445.7 419.3,446.3 423.5,446.8 427.7,447.4 431.8,447.9 436.0,448.4 440.2,448.9 444.4,449.4 448.5,449.8 452.7,450.2 456.9,450.6 461.1,451.0 465.2,451.4 469.4,451.7 473.6,452.1 477.8,452.4 481.9,452.7 486.1,452.9 490.3,453.2 494.5,453.4 498.6,453.6 502.8,453.8 507.0,453.9 511.1,454.1 515.3,454.2 519.5,454.3 523.7,454.4 527.8,454.4 532.0,454.5 536.2,454.5 540.4,454.5 544.5,454.5 548.7,454.4 552.9,454.4 557.1,454.3 561.2,454.2 565.4,454.1 569.6,453.9 573.8,453.8 577.9,453.6 582.1,453.4 586.3,453.2 590.5,452.9 594.6,452.7 598.8,452.4 603.0,452.1 607.2,451.8 611.3,451.4 615.5,451.0 619.7,450.7 623.9,450.3 628.0,449.8 632.2,449.4 636.4,448.9 640.6,448.4 644.7,447.9 648.9,447.4 653.1,446.9 657.3,446.3 661.4,445.7 665.6,445.1 669.8,444.5 674.0,443.8 678.1,443.2 682.3,442.5 686.5,441.8 690.7,441.0 694.8,440.3 699.0,439.5 703.2,438.7 707.4,437.9 711.5,437.1 715.7,436.2 719.9,435.4 724.1,434.5 728.2,433.6" fill="none" stroke="#0072bd" stroke-width="1.2"/>
<polygon points="299.1,415.1 300.1,415.4 301.1,415.6 302.1,415.9 303.1,416.2 304.1,416.5 305.1,418.7 306.1,419.0 307.1,418.5 308.1,419.5 309.1,419.8 310.1,420.1 311.1,420.3 312.1,420.6 313.1,420.9 314.1,421.1 315.1,421.4 316.1,421.1 317.1,420.5 318.1,421.0 319.1,422.4 320.1,422.1 321.1,422.4 322.1,422.6 323.1,422.2 324.1,423.1 325.1,423.4 326.1,423.1 327.1,423.3 328.1,422.5 329.1,423.8 330.1,424.0 331.1,424.2 332.1,424.5 333.1,424.0 334.1,425.0 335.1,426.4 336.1,426.6 337.1,426.9 338.1,427.1 339.1,427.3 340.1,427.6 341.1,426.3 342.1,426.6 343.1,428.3 344.1,428.5 345.2,428.7 346.2,428.9 347.2,427.5 348.2,427.7 349.2,427.9 350.2,429.9 351.2,430.1 352.2,430.3 353.2,428.5 354.2,428.7 355.2,430.8 356.2,431.0 357.2,429.9 358.2,431.4 359.2,430.1 360.2,430.3 361.2,430.5 362.2,429.9 363.2,431.0 364.2,431.2 365.2,431.4 366.2,431.6 367.2,431.8 368.2,432.0 369.2,432.2 370.2,431.8 371.2,433.7 372.2,432.7 373.2,434.0 374.2,434.2 375.2,434.4 376.2,434.6 377.2,434.8 378.2,435.0 379.2,435.2 380.2,435.4 381.2,435.5 382.2,435.7 383.2,435.7 384.2,435.9 385.2,436.1 386.2,436.3 387.2,435.7 388.2,435.9 389.2,435.5 390.2,436.4 391.2,435.4 392.2,435.3 393.2,435.4 394.3,436.4 395.3,437.0 396.3,437.2 397.3,437.3 398.3,437.5 399.3,437.7 400.3,437.8 401.3,436.5 402.3,438.1 403.3,438.3 404.3,439.6 405.3,439.7 406.3,439.9 407.3,440.3 408.3,440.4 409.3,440.6 410.3,440.7 411.3,440.9 412.3,441.0 413.3,440.1 414.3,440.2 415.3,441.6 416.3,441.8 417.3,441.2 418.3,442.0 419.3,441.2 420.3,441.4 421.3,441.5 422.3,441.6 423.3,441.8 424.3,441.9 425.3,442.0 426.3,442.2 427.3,441.3 428.3,441.4 429.3,441.5 430.3,441.6 431.3,442.5 432.3,442.6 433.3,442.7 434.3,442.9 435.3,441.5 436.3,443.1 437.3,443.2 438.3,443.3 439.3,443.4 440.3,443.6 441.3,443.1 442.3,443.8 443.3,444.1 444.4,445.1 445.4,445.3 446.4,445.4 447.4,443.6 448.4,443.7 449.4,444.9 450.4,445.6 451.4,445.7 452.4,445.8 453.4,445.9 454.4,444.7 455.4,446.1 456.4,446.2 457.4,446.3 458.4,446.4 459.4,446.5 460.4,446.6 461.4,446.7 462.4,446.7 463.4,446.8 464.4,446.1 465.4,446.2 466.4,446.3 467.4,446.4 468.4,446.5 469.4,446.6 470.4,446.6 471.4,446.7 472.4,446.8 473.4,446.0 474.4,446.0 475.4,447.0 476.4,447.1 477.4,447.2 478.4,447.2 479.4,448.3 480.4,448.4 481.4,448.4 482.4,448.5 483.4,447.5 484.4,446.8 485.4,447.6 486.4,447.6 487.4,446.8 488.4,446.9 489.4,447.0 490.4,447.0 491.4,447.7 492.4,447.7 493.4,447.8 494.5,446.3 495.5,447.9 496.5,447.9 497.5,448.0 498.5,448.0 499.5,448.1 500.5,448.1 501.5,448.2 502.5,448.2 503.5,449.8 504.5,449.8 505.5,449.9 506.5,449.9 507.5,448.9 508.5,449.0 509.5,449.0 510.5,449.0 511.5,449.1 512.5,449.1 513.5,449.1 514.5,449.2 515.5,448.8 516.5,447.4 517.5,447.4 518.5,447.4 519.5,447.4 519.5,461.5 518.5,461.5 517.5,461.5 516.5,461.4 515.5,459.9 514.5,459.8 513.5,459.8 512.5,459.7 511.5,459.7 510.5,459.7 509.5,459.6 508.5,459.6 507.5,459.6 506.5,459.3 505.5,459.6 504.5,458.6 503.5,458.6 502.5,458.9 501.5,458.9 500.5,458.8 499.5,458.8 498.5,460.0 497.5,458.7 496.5,458.7 495.5,458.6 494.5,459.1 493.4,458.5 492.4,458.5 491.4,458.4 490.4,459.4 489.4,459.3 488.4,459.3 487.4,460.3 486.4,459.1 485.4,459.0 484.4,457.1 483.4,458.5 482.4,458.1 481.4,458.0 480.4,458.9 479.4,457.9 478.4,457.2 477.4,457.6 476.4,457.0 475.4,457.0 474.4,457.8 473.4,456.8 472.4,456.7 471.4,456.7 470.4,456.6 469.4,457.5 468.4,456.4 467.4,456.3 466.4,457.5 465.4,457.3 464.4,456.1 463.4,456.4 462.4,456.3 461.4,456.2 460.4,457.3 459.4,456.1 458.4,456.0 457.4,455.9 456.4,455.8 455.4,455.7 454.4,455.6 453.4,456.7 452.4,455.4 451.4,455.3 450.4,455.2 449.4,455.1 448.4,455.3 447.4,455.2 446.4,454.0 445.4,454.6 444.4,453.8 443.3,453.7 442.3,454.7 441.3,454.6 440.3,454.5 439.3,454.4 438.3,454.2 437.3,454.1 436.3,455.3 435.3,453.9 434.3,453.8 433.3,454.7 432.3,453.5 431.3,453.4 430.3,453.8 429.3,453.6 428.3,453.5 427.3,453.4 426.3,451.5 425.3,451.4 424.3,451.3 423.3,451.1 422.3,451.0 421.3,450.9 420.3,450.7 419.3,450.6 418.3,451.6 417.3,451.5 416.3,452.8 415.3,451.2 414.3,451.7 413.3,450.6 412.3,450.6 411.3,451.2 410.3,450.3 409.3,450.2 408.3,451.2 407.3,449.9 406.3,449.6 405.3,449.4 404.3,449.3 403.3,449.3 402.3,449.2 401.3,449.0 400.3,448.9 399.3,448.7 398.3,449.2 397.3,448.4 396.3,448.2 395.3,448.1 394.3,446.6 393.2,447.0 392.2,446.3 391.2,446.1 390.2,446.5 389.2,446.3 388.2,448.2 387.2,446.6 386.2,447.4 385.2,446.5 384.2,446.4 383.2,446.2 382.2,446.4 381.2,446.2 380.2,446.1 379.2,445.9 378.2,445.7 377.2,445.5 376.2,445.3 375.2,445.1 374.2,444.9 373.2,444.7 372.2,444.5 371.2,444.3 370.2,444.7 369.2,443.2 368.2,443.0 367.2,442.8 366.2,442.6 365.2,442.4 364.2,442.2 363.2,442.0 362.2,440.9 361.2,440.6 360.2,440.4 359.2,440.2 358.2,439.9 357.2,439.7 356.2,439.5 355.2,439.3 354.2,439.8 353.2,439.6 352.2,438.6 351.2,438.3 350.2,439.2 349.2,439.4 348.2,439.2 347.2,439.0 346.2,439.1 345.2,440.3 344.1,438.6 343.1,438.4 342.1,439.7 341.1,438.0 340.1,437.7 339.1,437.5 338.1,437.3 337.1,437.7 336.1,436.8 335.1,436.6 334.1,435.5 333.1,435.3 332.1,435.0 331.1,434.8 330.1,434.5 329.1,434.3 328.1,434.0 327.1,433.8 326.1,432.4 325.1,432.1 324.1,431.9 323.1,431.6 322.1,432.1 321.1,431.8 320.1,431.6 319.1,431.6 318.1,431.4 317.1,431.1 316.1,430.8 315.1,430.6 314.1,430.3 313.1,430.1 312.1,431.0 311.1,429.5 310.1,429.6 309.1,429.3 308.1,429.0 307.1,428.8 306.1,428.5 305.1,428.2 304.1,429.7 303.1,429.4 302.1,429.2 301.1,428.9 300.1,428.6 299.1,428.9" fill="#ff0000"/>
<rect x="90.5" y="390.5" width="638" height="95" fill="none" stroke="#262626" stroke-width="1"/>
<path d="M135.5 391v6M135.5 485v-6M219.5 391v6M219.5 485v-6M302.5 391v6M302.5 485v-6M386.5 391v6M386.5 485v-6M469.5 391v6M469.5 485v-6M553.5 391v6M553.5 485v-6M636.5 391v6M636.5 485v-6M720.5 391v6M720.5 485v-6M91 486.5h6M728 486.5h-6M91 454.5h6M728 454.5h-6M91 422.5h6M728 422.5h-6M91 391.5h6M728 391.5h-6" stroke="#262626" stroke-width="1"/>
<text x="135.4" y="505.0" text-anchor="middle">-2</text>
<text x="218.9" y="505.0" text-anchor="middle">-1</text>
<text x="302.4" y="505.0" text-anchor="middle">0</text>
<text x="385.9" y="505.0" text-anchor="middle">1</text>
<text x="469.4" y="505.0" text-anchor="middle">2</text>
<text x="552.9" y="505.0" text-anchor="middle">3</text>
<text x="636.4" y="505.0" text-anchor="middle">4</text>
<text x="719.9" y="505.0" text-anchor="middle">5</text>
<text x="85.0" y="490.5" text-anchor="end">-2</text>
<text x="85.0" y="458.9" text-anchor="end">-1</text>
<text x="85.0" y="427.2" text-anchor="end">0</text>
<text x="85.0" y="395.5" text-anchor="end">1</text>
<text x="91" y="389" font-size="12">&#215;</text><text x="100" y="389">10</text><text x="115" y="383" font-size="11">-6</text>
<text x="694" y="529" font-size="12">&#215;</text><text x="703" y="529">10</text><text x="718" y="523" font-size="11">-3</text>
</svg>

<!-- ===== Slider window ===== -->
<div class="a" style="left:82px;top:649px;width:672px;height:317px;border:1px solid #4a4a4a;border-radius:7px;box-shadow:1px 3px 9px rgba(0,0,0,.35);background:linear-gradient(90deg,#fbfcfd,#ffffff 40%,#f4f6f8 70%,#fafbfc)"></div>
<svg class="a" style="left:90px;top:656px" width="16" height="16">
<rect x=".5" y=".5" width="15" height="15" rx="1" fill="#f0f2f4" stroke="#9aa4b0"/><rect x="1" y="1" width="14" height="1.6" fill="#8ab0d8"/>
<path d="M1.8 9.8L6.6 7l1.6 3.6z" fill="#4a98dc"/><path d="M6.6 7L8.8 3.2 10.4 8 7.8 13.2 6.2 10.4z" fill="#d84a18"/><path d="M8.8 3.2L13 11.8 10.6 10.2 10.4 8z" fill="#c63c14"/><path d="M8.6 4.6L9.6 8.4 7.8 12.2 7.6 8z" fill="#f4a82a"/>
</svg>
<div class="t" style="left:111px;top:658px;font-size:12.5px;letter-spacing:-.2px;color:#111">Slider</div>
<div class="cap" style="left:644px;top:649px;width:103px;height:20px;background:linear-gradient(#fdfdfd,#f2f2f2);border-color:#6f7680"></div>
<div class="a" style="left:672px;top:650px;width:1px;height:18px;background:#a8aeb5"></div>
<div class="a" style="left:699px;top:650px;width:1px;height:18px;background:#a8aeb5"></div>
<div class="a" style="left:653px;top:658px;width:12px;height:5px;border:1.5px solid #4c5566;border-radius:1px"></div>
<div class="a" style="left:680px;top:653px;width:12px;height:10px;border:1px solid #b8bcc2;border-radius:1px"><div class="a" style="left:2px;top:2px;width:6px;height:4px;border:1px solid #b8bcc2"></div></div>
<svg class="a" style="left:716px;top:653px" width="14" height="12"><path d="M1 1.5h3.6l2.4 3 2.4-3h3.6l-4 4.5 4 4.5h-3.6l-2.4-3-2.4 3h-3.6l4-4.5z" fill="#fff" stroke="#4c5566" stroke-width="1.3" stroke-linejoin="round"/></svg>
<div class="a" style="left:89px;top:678px;width:658px;height:281px;background:#f0f0f0;border:1px solid #7a7a7a"></div>

<div class="t" style="left:136px;top:706px;font-size:17.5px">Y</div>
<div class="t" style="left:295px;top:696px;font-size:20.5px;letter-spacing:-0.1px;transform:scaleX(.95);transform-origin:0 0">move line</div>
<div class="t" style="left:403px;top:698px;font-size:17px;letter-spacing:-0.2px">X: 584</div>
<div class="t" style="left:645px;top:701px;font-size:17.3px;letter-spacing:-0.3px;transform:scaleX(.93);transform-origin:0 0">In Y verk&uuml;rzen</div>

<!-- Y scrollbar -->
<div class="a" style="left:116px;top:729px;width:51px;height:150px;background:#f4f4f4;border-right:2px solid #7f7f7f;border-bottom:2px solid #7f7f7f;border-left:1px solid #fff;border-top:1px solid #fff"></div>
<div class="a" style="left:135px;top:734px;width:0;height:0;border-left:5px solid transparent;border-right:5px solid transparent;border-bottom:5px solid #6a6a6a"></div>
<div class="a" style="left:116px;top:743px;width:49px;height:56px;background:#e6e6e6;border-top:2px solid #7f7f7f;border-left:1px solid #7f7f7f"></div>
<div class="a" style="left:116px;top:799px;width:49px;height:9px;background:#f2f2f2;border-bottom:2px solid #7f7f7f"></div>
<div class="a" style="left:116px;top:808px;width:49px;height:55px;background:#e6e6e6;border-left:1px solid #7f7f7f"></div>
<div class="a" style="left:135px;top:869px;width:0;height:0;border-left:5px solid transparent;border-right:5px solid transparent;border-top:5px solid #6a6a6a"></div>

<!-- right scrollbar -->
<div class="a" style="left:670px;top:729px;width:51px;height:150px;background:#f4f4f4;border-right:2px solid #7f7f7f;border-bottom:2px solid #7f7f7f;border-left:1px solid #fff;border-top:1px solid #fff"></div>
<div class="a" style="left:689px;top:734px;width:0;height:0;border-left:5px solid transparent;border-right:5px solid transparent;border-bottom:5px solid #6a6a6a"></div>
<div class="a" style="left:670px;top:743px;width:49px;height:56px;background:#e6e6e6;border-top:2px solid #7f7f7f;border-left:1px solid #7f7f7f"></div>
<div class="a" style="left:670px;top:799px;width:49px;height:9px;background:#f2f2f2;border-bottom:2px solid #7f7f7f"></div>
<div class="a" style="left:670px;top:808px;width:49px;height:55px;background:#e6e6e6;border-left:1px solid #7f7f7f"></div>
<div class="a" style="left:689px;top:869px;width:0;height:0;border-left:5px solid transparent;border-right:5px solid transparent;border-top:5px solid #6a6a6a"></div>

<!-- horizontal slider -->
<div class="a" style="left:189px;top:730px;width:291px;height:48px;background:#f4f4f4;border-right:2px solid #7f7f7f;border-bottom:2px solid #7f7f7f;border-left:1px solid #fff;border-top:1px solid #fff"></div>
<div class="a" style="left:195px;top:749px;width:0;height:0;border-top:5px solid transparent;border-bottom:5px solid transparent;border-right:5px solid #6a6a6a"></div>
<div class="a" style="left:203px;top:730px;width:155px;height:46px;background:#e6e6e6;border-left:2px solid #7f7f7f;border-top:1px solid #7f7f7f"></div>
<div class="a" style="left:358px;top:730px;width:22px;height:46px;background:#f2f2f2;border-right:2px solid #7f7f7f;border-left:1px solid #fff"></div>
<div class="a" style="left:380px;top:730px;width:85px;height:46px;background:#e6e6e6;border-top:1px solid #7f7f7f"></div>
<div class="a" style="left:470px;top:749px;width:0;height:0;border-top:5px solid transparent;border-bottom:5px solid transparent;border-left:5px solid #6a6a6a"></div>

<div class="btn" style="left:504px;top:729px;width:148px;height:48px;font-size:16px;line-height:50px">Werte speichern</div>
<div class="t" style="left:204px;top:807px;font-size:17.5px;letter-spacing:-0.3px">X1:</div>
<div class="t" style="left:353px;top:807px;font-size:17.5px;letter-spacing:-0.3px">X2:</div>
<div class="btn" style="left:204px;top:829px;width:99px;height:49px;font-size:11px;line-height:49px">Interval Grenze 1</div>
<div class="btn" style="left:354px;top:829px;width:99px;height:49px;font-size:11px;line-height:49px">Interval Grenze 2</div>
<div class="btn" style="left:504px;top:829px;width:122px;height:49px;font-size:11px;line-height:49px">Mittelwert berechnen</div>
<div class="t" style="left:504px;top:884px;font-size:17.2px;letter-spacing:-0.2px;transform:scaleX(.93);transform-origin:0 0">Mittelwert:</div>
<div class="btn" style="left:118px;top:906px;width:149px;height:49px;font-size:11px;line-height:49px">Auto Linescan</div>
</body></html>
